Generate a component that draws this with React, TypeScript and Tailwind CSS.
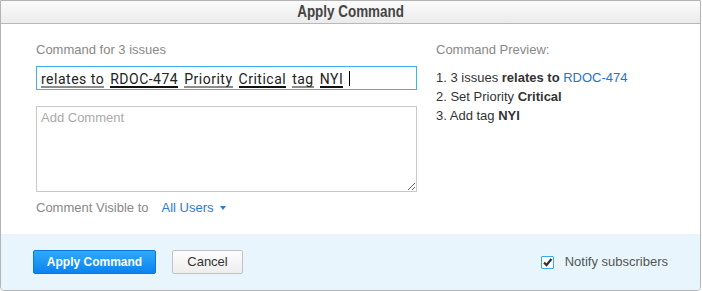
import React from "react";

const sans = { fontFamily: '"Liberation Sans", Arial, sans-serif' };

function Word({ children, dark }: { children: React.ReactNode; dark?: boolean }) {
  return (
    <span
      className={`inline-block leading-[13px] border-b-2 ${dark ? "border-[#111]" : "border-[#8c8c8c]"}`}
    >
      {children}
    </span>
  );
}

export default function App() {
  return (
    <div className="w-[702px] h-[291px] bg-white" style={sans}>
      <div className="w-[701px] h-[291px] border border-[#b3b3b3] rounded-b-[4px] flex flex-col overflow-hidden">
        {/* header */}
        <div className="h-[23px] shrink-0 border-b border-[#b8b8b8] bg-gradient-to-b from-[#fbfbfb] to-[#ebebeb] flex items-center justify-center">
          <span className="inline-block scale-x-[0.84] text-[16px] font-bold text-[#454545] leading-none">
            Apply Command
          </span>
        </div>

        {/* body */}
        <div className="flex-1 flex pt-[18px] pl-[35px]">
          <div className="w-[381px] flex flex-col">
            <div className="text-[13px] leading-[16px] text-[#888]">Command for 3 issues</div>
            <div
              className="mt-[8px] h-[24px] border border-[#3cb2f0] flex items-end pl-[4px] pb-[1px] text-[14px] tracking-[0.5px] text-[#222] gap-[6px] whitespace-nowrap"
              style={{ fontFamily: "Roboto, sans-serif" }}
            >
              <Word>relates to</Word>
              <Word dark>RDOC-474</Word>
              <Word>Priority</Word>
              <Word dark>Critical</Word>
              <Word>tag</Word>
              <Word dark>NYI</Word>
              <span className="w-[1px] h-[15px] bg-black mb-[2px] ml-[0px]" />
            </div>
            <textarea
              className="mt-[16px] h-[86px] w-[381px] border border-[#c9c9c9] px-[4px] pt-[3px] text-[13px] leading-[16px] text-[#333] placeholder:text-[#aaa] outline-none resize-y"
              style={sans}
              placeholder="Add Comment"
            />
            <div className="mt-[8px] flex items-center text-[13px] leading-[16px]">
              <span className="text-[#888]">Comment Visible to</span>
              <span className="ml-[13px] text-[#2a7bd6]">All Users</span>
              <svg className="ml-[6px]" width="6" height="4" viewBox="0 0 6 4">
                <path d="M0 0 L6 0 L3 4 Z" fill="#2a7bd6" />
              </svg>
            </div>
          </div>

          <div className="ml-[19px] flex flex-col text-[13px]">
            <div className="leading-[16px] text-[#888]">Command Preview:</div>
            <div className="mt-[10px] leading-[19px] text-[#333]">
              <div>
                1. 3 issues <b>relates to</b> <span className="text-[#1f74d4]">RDOC-474</span>
              </div>
              <div>
                2. Set Priority <b>Critical</b>
              </div>
              <div>
                3. Add tag <b>NYI</b>
              </div>
            </div>
          </div>
        </div>

        {/* footer */}
        <div className="h-[56px] shrink-0 bg-[#e8f5fd] flex items-start pt-[16px] pl-[32px] pr-[32px]">
          <button className="h-[24px] w-[123px] rounded-[2px] border border-[#0b78d8] bg-gradient-to-b from-[#2eaaf9] to-[#0a82f0] text-white text-[12px] font-bold">
            Apply Command
          </button>
          <button className="ml-[16px] h-[24px] w-[71px] rounded-[2px] border border-[#c2c2c2] bg-gradient-to-b from-[#fdfdfd] to-[#eeeeee] text-[#333] text-[13px]">
            Cancel
          </button>
          <div className="ml-auto flex items-center h-[24px] mt-[0px]">
            <div className="w-[13px] h-[13px] border border-[#3aa9ee] bg-white rounded-[1px] flex items-center justify-center">
              <svg width="11" height="11" viewBox="0 0 11 11">
                <path d="M2 5.5 L4.5 8 L9.5 2" fill="none" stroke="#333" strokeWidth="2.2" />
              </svg>
            </div>
            <span className="ml-[11px] text-[13px] text-[#555]">Notify subscribers</span>
          </div>
        </div>
      </div>
    </div>
  );
}
